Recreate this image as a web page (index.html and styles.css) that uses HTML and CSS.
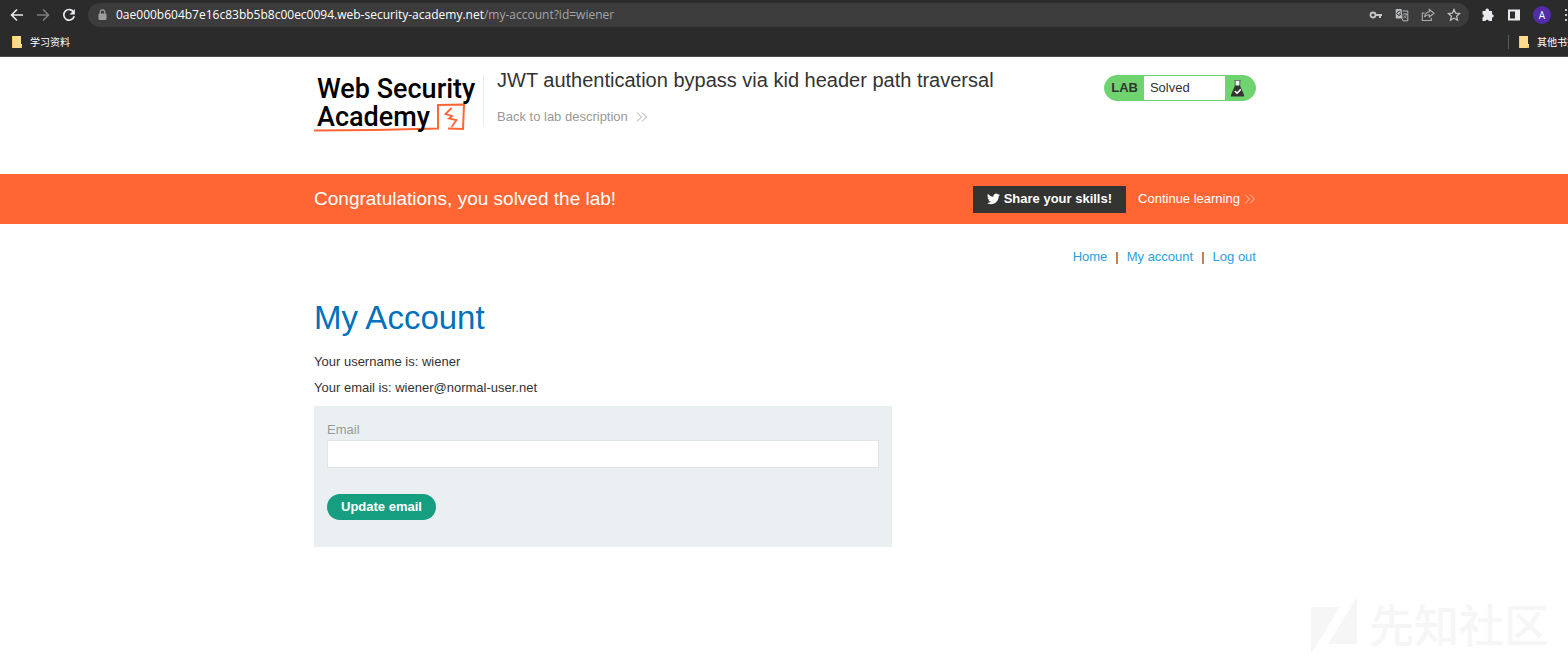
FILE: index.html
```html
<!DOCTYPE html>
<html lang="en">
<head>
<meta charset="utf-8">
<meta name="viewport" content="width=device-width, initial-scale=1">
<title>JWT authentication bypass via kid header path traversal</title>
<link rel="stylesheet" href="styles.css">
</head>
<body>
<div class="browser">
  <div class="toolbar">
    <button class="tool" aria-label="Back"><svg width="14" height="14" viewBox="0 0 14 14"><path d="M13 7H2M7 1.5 1.5 7 7 12.5" fill="none" stroke="#e8eaed" stroke-width="1.6"/></svg></button>
    <button class="tool" aria-label="Forward"><svg width="14" height="14" viewBox="0 0 14 14"><path d="M1 7h11M7 1.5 12.500 7 7 12.500" fill="none" stroke="#7d7f82" stroke-width="1.600"/></svg></button>
    <button class="tool" aria-label="Reload"><svg width="14" height="14" viewBox="0 0 14 14"><path d="M11.600 4A5.300 5.300 0 1 0 12.200 8.300" fill="none" stroke="#e8eaed" stroke-width="1.700"/><path d="M12.900 1v5.400H7.500z" fill="#e8eaed"/></svg></button>
    <div class="address">
      <svg width="9" height="12" viewBox="0 0 9 12"><path d="M2.300 5V3a2.200 2.200 0 0 1 4.400 0v2" fill="none" stroke="#9b9da0" stroke-width="1.200"/><rect x=".5" y="4.500" width="8" height="6.500" rx="1" fill="#9b9da0"/></svg>
      <span class="url"><span class="host">0ae000b604b7e16c83bb5b8c00ec0094.web-security-academy.net</span>/my-account?id=wiener</span>
      <div class="page-actions">
        <button class="tool" aria-label="Passwords"><svg width="14" height="14" viewBox="0 0 14 14"><circle cx="4" cy="7" r="2.500" fill="none" stroke="#c4c7ca" stroke-width="1.800"/><path d="M6.500 7H13M11 7v3" fill="none" stroke="#c4c7ca" stroke-width="2"/></svg></button>
        <button class="tool" aria-label="Translate"><svg width="14" height="14" viewBox="0 0 14 14"><path d="M1.500 1h5l1.200 9.500H1.500a.8.8 0 0 1-.8-.8V1.800a.8.8 0 0 1 .8-.8z" fill="#b9bbbe"/><path d="M7.500 3h5.300v9.800H8l-1-2.300" fill="none" stroke="#b9bbbe"/><path d="M8 6h4M10 5v1M11.500 6c-.5 2-1.500 3-3 4M8.700 7.500l3 3" fill="none" stroke="#b9bbbe" stroke-width=".8"/><path d="M5.800 4.300A2 2 0 1 0 6 6H4.200" fill="none" stroke="#3b3c3f"/></svg></button>
        <button class="tool" aria-label="Share"><svg width="14" height="14" viewBox="0 0 14 14"><path d="M3.500 5H1.300v7.500h9V10" fill="none" stroke="#aeb0b3" stroke-width="1.100"/><path d="M8.300 1.500 13 5.300 8.300 9V6.700C6 6.700 4.600 7.400 3.500 9c.4-3 2-4.800 4.800-5.200z" fill="none" stroke="#aeb0b3" stroke-width="1.100"/></svg></button>
        <button class="tool" aria-label="Bookmark"><svg width="14" height="14" viewBox="0 0 14 14"><path d="m7 1.500 1.600 3.700 4 .3-3 2.700.9 4L7 10.100l-3.500 2.100.9-4-3-2.700 4-.3z" fill="none" stroke="#c4c7ca" stroke-width="1.200"/></svg></button>
      </div>
    </div>
    <button class="tool" aria-label="Extensions"><svg width="14" height="14" viewBox="0 0 14 14"><path d="M1.500 3h3a1.800 1.800 0 1 1 3.400 0H11v3.200a1.700 1.700 0 1 1 0 3.400V13H7.800a1.700 1.700 0 0 0-3.300 0h-3V9.600a1.700 1.700 0 0 0 0-3.300z" fill="#e8eaed"/></svg></button>
    <button class="tool" aria-label="Side panel"><svg width="14" height="14" viewBox="0 0 14 14"><path d="M1 1.500h12v11H1zM3 3.500v7h5v-7z" fill="#e8eaed" fill-rule="evenodd"/></svg></button>
    <button class="avatar" aria-label="Profile">A</button>
    <button class="tool menu" aria-label="Menu"><svg width="4" height="14" viewBox="0 0 4 14"><path d="M2 1h2v2H2zM2 6h2v2H2zM2 11h2v2H2z" fill="#c4c7ca"/></svg></button>
  </div>
  <div class="bookmarks">
    <a class="bookmark" href="#"><svg width="10" height="12" viewBox="0 0 10 12"><path d="M0 0h9v8h1v4H0z" fill="#ffdc8c"/><path d="M0 0h1v12H0zM8 10h2v2H8z" fill="#f5c960"/></svg>学习资料</a>
    <a class="bookmark other" href="#"><svg width="10" height="12" viewBox="0 0 10 12"><path d="M0 0h9v8h1v4H0z" fill="#ffdc8c"/><path d="M0 0h1v12H0zM8 10h2v2H8z" fill="#f5c960"/></svg>其他书签</a>
  </div>
</div>

<header class="lab-header container">
  <a class="logo" href="#" aria-label="Web Security Academy">
    <svg width="168" height="62" viewBox="0 0 168 62">
      <path d="M0 55.500 60 55 124 53.500V30L150 29.500 149 54 134 53.500" fill="none" stroke="#ff6633" stroke-width="2"/>
      <path d="m137.500 33-6 6 6.500 2-3 2.500 7.500 1.500-5 7" fill="none" stroke="#ff6633" stroke-width="1.800"/>
      <text class="logo-text" x="3" y="23">Web Security</text>
      <text class="logo-text" x="3" y="51">Academy</text>
    </svg>
  </a>
  <div class="title">
    <h2>JWT authentication bypass via kid header path traversal</h2>
    <a class="back" href="#">Back to lab description <svg width="12" height="10" viewBox="0 0 12 10"><path d="m1 .5 4.500 4.500L1 9.500M6 .5l4.500 4.500L6 9.500" fill="none" stroke="#aaaaaa"/></svg></a>
  </div>
  <div class="status">
    <span class="lab">LAB</span>
    <span class="solved">Solved</span>
    <svg width="30" height="24" viewBox="0 0 30 24"><path d="M9 4h7v1.200H9z" fill="#777"/><path d="M10.500 5h4v5h-4z" fill="#e8f5e8"/><path d="M10.200 5v5M14.800 5v5" stroke="#555" stroke-width=".8"/><path d="M10 9.500h5l4 9.500v1.500H6V19z" fill="#333332"/><path d="m9.800 15 2.200 2.200 3.800-3.800" fill="none" stroke="#fff" stroke-width="1.500"/></svg>
  </div>
</header>

<section class="banner">
  <div class="container banner-row">
    <h4>Congratulations, you solved the lab!</h4>
    <div class="banner-links">
      <button class="share"><svg width="13" height="12" viewBox="0 0 24 20"><path d="M24 2.400a10 10 0 0 1-2.800.8A5 5 0 0 0 23.300.400a10 10 0 0 1-3.100 1.200 4.900 4.900 0 0 0-8.400 4.500A14 14 0 0 1 1.700.900a4.900 4.900 0 0 0 1.500 6.600A5 5 0 0 1 1 6.900a4.900 4.900 0 0 0 3.900 4.900 5 5 0 0 1-2.200.1 4.900 4.900 0 0 0 4.600 3.400A9.900 9.900 0 0 1 0 17.300 14 14 0 0 0 7.500 19.500c9.100 0 14.300-7.700 14-14.600A10 10 0 0 0 24 2.400z" fill="#fff"/></svg>Share your skills!</button>
      <a class="continue" href="#">Continue learning<svg width="12" height="10" viewBox="0 0 12 10"><path d="m1 .5 4.500 4.500L1 9.500M6 .5l4.500 4.500L6 9.500" fill="none" stroke="#ffc2ad"/></svg></a>
    </div>
  </div>
</section>

<main class="container">
  <nav class="links"><a href="#">Home</a><span>|</span><a href="#">My account</a><span>|</span><a href="#">Log out</a></nav>
  <h1>My Account</h1>
  <p>Your username is: wiener</p>
  <p>Your email is: wiener@normal-user.net</p>
  <form class="email-form">
    <label for="email">Email</label>
    <input id="email" type="email">
    <button class="update" type="button">Update email</button>
  </form>
</main>

<div class="watermark">
  <svg width="46" height="58" viewBox="0 0 46 58"><path d="M0 10h29L0 57zM46 0v47H17z" fill="#f6f6f6"/></svg>
  <span>先知社区</span>
</div>
</body>
</html>
```
FILE: styles.css
```css
* { box-sizing: border-box; }
body {
  margin: 0;
  min-height: 100vh;
  position: relative;
  overflow-x: hidden;
  background: #fff;
  color: #333332;
  font: 13px/20px "Liberation Sans", Arial, sans-serif;
}
button { font: inherit; border: 0; padding: 0; cursor: pointer; }
a { text-decoration: none; }
h1, h2, h4, p { margin: 0; font-weight: 400; }
svg { display: block; flex: none; }

.browser {
  background: #2b2b2b;
  border-bottom: 1px solid #4a4a4a;
  font-family: "Open Sans", "Noto Sans CJK SC", sans-serif;
  overflow: hidden;
}
.toolbar { display: flex; align-items: center; gap: 12px; height: 30px; padding-left: 10px; }
.tool { display: flex; background: none; }
.address {
  flex: 1;
  display: flex;
  align-items: center;
  gap: 9px;
  height: 24px;
  padding: 0 8px 0 10px;
  border-radius: 12px;
  background: #3c3c3c;
}
.url { color: #a3a5a9; font-size: 12px; line-height: 20px; white-space: nowrap; }
.host { color: #fff; }
.page-actions { display: flex; gap: 12px; margin-left: auto; }
.avatar {
  width: 18px;
  height: 18px;
  border-radius: 50%;
  background: #512da8;
  color: #fff;
  font-size: 10px;
  line-height: 18px;
}
.menu { width: 5px; overflow: hidden; }
.bookmarks { display: flex; justify-content: space-between; height: 26px; padding: 2px 0 4px 12px; }
.bookmark {
  display: flex;
  align-items: center;
  gap: 8px;
  color: #fff;
  font: 10px/20px "Noto Sans CJK SC", sans-serif;
  white-space: nowrap;
}
.other { height: 14px; margin: 3px -9px 0 0; padding-left: 10px; border-left: 1px solid #5a5a5a; }

.container { width: 60.2%; margin: 0 auto; padding-left: 2px; }
.lab-header { display: flex; align-items: flex-start; height: 117px; padding-top: 18px; }
.logo { padding-right: 1px; border-right: 1px solid #e6eeee; height: 51px; }
.logo-text { font: 500 27px Roboto, sans-serif; fill: #000; }
.title { flex: 1; padding-left: 13px; }
h2 { margin-top: -9px; font-size: 20px; line-height: 28px; }
.back { display: flex; align-items: center; gap: 8px; margin-top: 13px; color: #999; }
.status {
  display: flex;
  align-items: center;
  height: 26px;
  border: 1px solid #6bd36b;
  border-radius: 13px;
  background: #6fd46f;
  overflow: hidden;
}
.lab { padding: 0 6px; font-weight: 700; }
.solved { width: 81px; padding: 2px 6px; height: 24px; background: #fff; }

.banner { background: #ff6633; color: #fff; }
.banner-row { display: flex; align-items: center; justify-content: space-between; height: 50px; }
h4 { font-size: 19px; line-height: 28px; }
.banner-links { display: flex; align-items: center; gap: 12px; }
.share {
  display: flex;
  align-items: center;
  gap: 4px;
  height: 27px;
  padding: 0 14px;
  background: #333332;
  color: #fff;
  font-weight: 700;
}
.continue { display: flex; align-items: center; gap: 4px; color: #fff; }

.links { display: flex; justify-content: flex-end; gap: 8px; padding-top: 23px; }
.links a { color: #29a1dd; }
h1 { margin: 31px 0 14px; color: #0071ba; font-size: 33px; line-height: 40px; }
p { margin-bottom: 6px; }
.email-form {
  display: flex;
  flex-direction: column;
  align-items: flex-start;
  width: 61.4%;
  margin-top: 8px;
  padding: 14px 13px 27px;
  background: #eaf0f2;
}
.email-form label { color: #999; }
.email-form input { width: 100%; height: 28px; border: 1px solid #e0e6e8; background: #fff; font: inherit; padding: 0 8px; }
.update {
  height: 26px;
  margin-top: 26px;
  padding: 0 14px;
  border-radius: 13px;
  background: #159e80;
  color: #fff;
  font-weight: 700;
}

.watermark {
  position: absolute;
  right: 19px;
  bottom: 4px;
  display: flex;
  align-items: flex-start;
  gap: 12px;
  color: #f6f6f6;
  font: 500 45px/54px "Noto Sans CJK SC", sans-serif;
}
```
